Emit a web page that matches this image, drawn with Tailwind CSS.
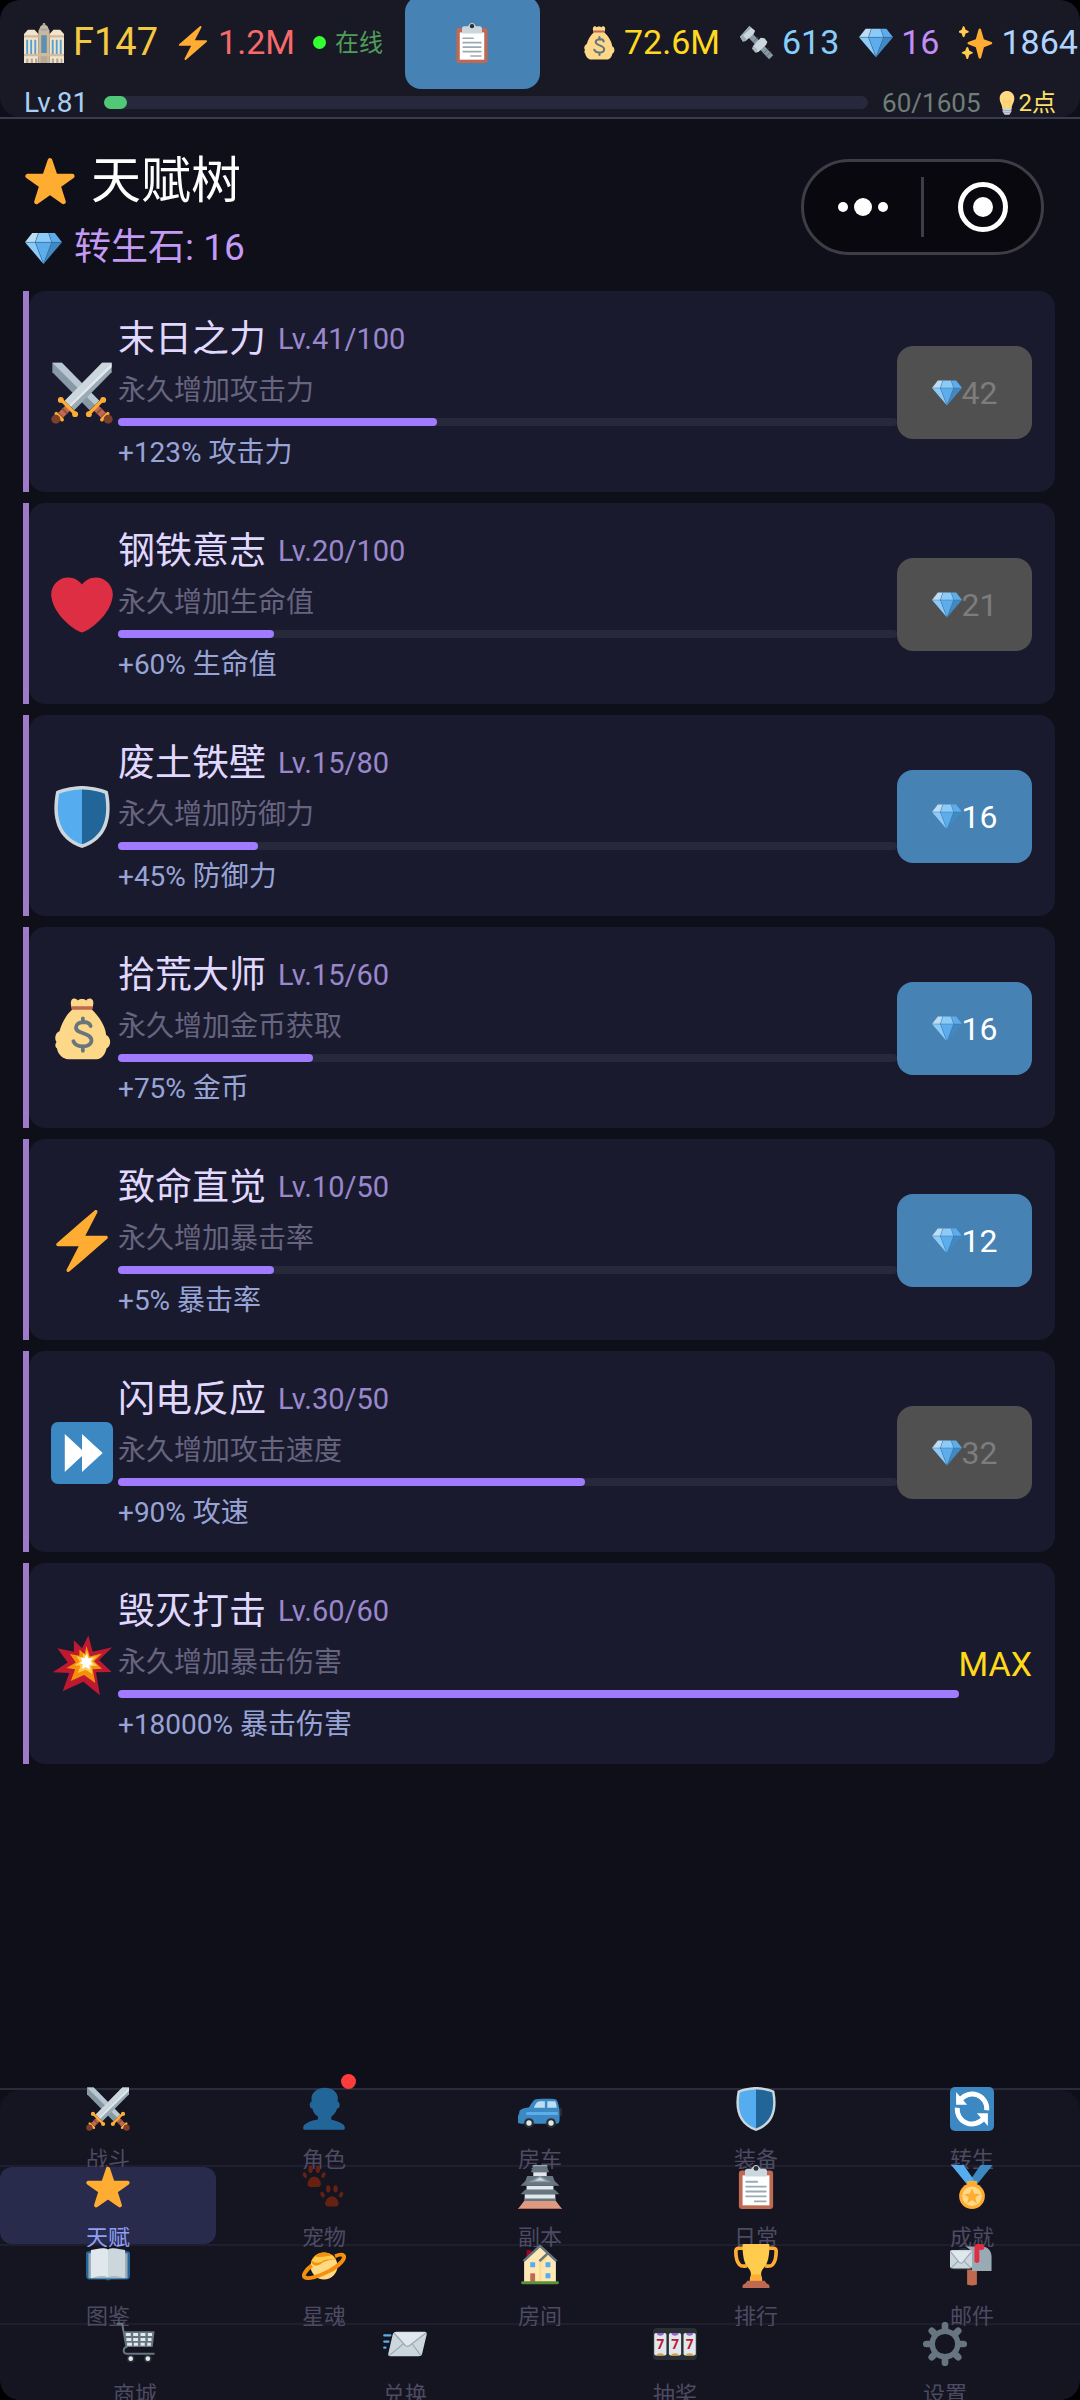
<!DOCTYPE html>
<html lang="zh-CN">
<head>
  <meta charset="UTF-8">
  <meta name="viewport" content="width=device-width, initial-scale=1.0">
  <title>天赋树</title>
  <script src="https://cdn.jsdelivr.net/npm/@tailwindcss/browser@4"></script>
</head>
<body class="bg-black font-[Roboto,'Noto_Sans_CJK_SC',sans-serif] text-white">
  <!-- Icon sprite -->
  <svg class="hidden" aria-hidden="true">
    <symbol id="star" viewBox="0 0 36 36"><path fill="#ffac33" stroke="#ffac33" stroke-width="3.4" stroke-linejoin="round" d="M18 3.2l3.7 11.1 12.3.2-9.900 7 3.600 11.500L18 26.200 8.300 33l3.600-11.500-9.900-7 12.300-.2z"/></symbol>
    <symbol id="gem" viewBox="0 0 36 36"><path fill="#bdddf4" d="M13 3H7l-7 9h10z"/><path fill="#5dadec" d="M36 12l-7-9h-6l3 9z"/><path fill="#4289c1" d="M26 12h10L18 33z"/><path fill="#8ccaf7" d="M10 12H0l18 21zm3-9l-3 9h16l-3-9z"/><path fill="#5dadec" d="M18 33l-8-21h16z"/><path fill="none" stroke="#2f6d9f" stroke-width=".5" d="M0 12h36M13 3l-3 9 8 21 8-21-3-9"/></symbol>
    <symbol id="bolt" viewBox="0 0 36 36"><path fill="#ffac33" d="M32.938 15.651C32.792 15.26 32.418 15 32 15H19.925L26.89 1.458c.219-.426.106-.947-.271-1.243C26.437.071 26.218 0 26 0c-.233 0-.466.082-.653.243L18 6.588 3.347 19.243c-.316.273-.43.714-.284 1.105S3.582 21 4 21h12.075L9.11 34.542c-.219.426-.106.947.271 1.243.182.144.401.215.619.215.233 0 .466-.082.653-.243L18 29.412l14.653-12.655c.317-.273.43-.714.285-1.106z"/></symbol>
    <symbol id="heart" viewBox="0 0 36 36"><path fill="#dd2e44" d="M35.885 11.833c0-5.45-4.418-9.868-9.867-9.868-3.308 0-6.227 1.633-8.018 4.129-1.791-2.496-4.71-4.129-8.017-4.129-5.45 0-9.868 4.417-9.868 9.868 0 .772.098 1.52.266 2.241C1.751 22.587 11.216 31.568 18 34.034c6.783-2.466 16.249-11.447 17.617-19.959.17-.721.268-1.469.268-2.242z"/></symbol>
    <symbol id="shield" viewBox="0 0 36 36"><path fill="#ccd6dd" d="M33 3c-7-3-15-3-15-3S10 0 3 3C0 18 3 31 18 36c15-5 18-18 15-33z"/><path fill="#55acee" d="M18 33.884C6.412 29.729 1.961 19.831 4.76 4.444 11.063 2.029 18 2 18 2z"/><path fill="#226699" d="M31.24 4.444C24.937 2.029 18 2 18 2v31.884c11.588-4.155 16.039-14.053 13.24-29.44z"/></symbol>
    <symbol id="swords" viewBox="0 0 36 36">
      <path fill="#8899a6" d="M.8.5h5.500L28 22.500 22.500 28 .8 6z"/><path fill="#b8c7d1" d="M.8.5h5.500L28 22.500l-2.500 2.500z"/>
      <path stroke="#bf6952" stroke-width="4" d="M26 26.500l6 6"/><path stroke="#8a4b38" stroke-width="1" d="M26.500 30l3-3M29 32.500l3-3"/>
      <path stroke="#ffac33" stroke-width="2" stroke-linecap="round" d="M22 30l8-8M29.500 33.500l3.500-3.500"/><circle cx="22" cy="30.300" r="1.700" fill="#ffac33"/><circle cx="30.300" cy="22" r="1.700" fill="#ffac33"/><circle cx="33.200" cy="33.200" r="2.600" fill="#7c3f2b"/>
      <path fill="#99aab5" d="M35.200.5h-5.500L8 22.500l5.500 5.500L35.200 6z"/><path fill="#ccd6dd" d="M35.200.5h-5.500L8 22.500l2.500 2.500z"/><path fill="#e1e8ed" d="M35.200.5L10.500 25l1 1L35.200 3z"/>
      <path stroke="#bf6952" stroke-width="4" d="M10 26.500l-6 6"/><path stroke="#8a4b38" stroke-width="1" d="M9.500 30l-3-3M7 32.500l-3-3"/>
      <path stroke="#ffac33" stroke-width="2" stroke-linecap="round" d="M14 30l-8-8M6.500 33.500L3 30"/><circle cx="14" cy="30.300" r="1.700" fill="#ffac33"/><circle cx="5.700" cy="22" r="1.700" fill="#ffac33"/><circle cx="2.800" cy="33.200" r="2.600" fill="#7c3f2b"/>
    </symbol>
    <symbol id="bag" viewBox="0 0 36 36"><path fill="#fdd888" d="M12.500 6.500C11 4 11.300 1 12.800.5c1.200-.5 2.400.3 2.700 1 .6-1.300 4.400-1.300 5 0 .4-.8 1.700-1.500 2.800-1C25 1.200 25 4 23.500 6.500c4 3.500 8.500 10.500 8.500 15 1.800.8 2.700 3 2.200 5-.3 1.400-1.200 2.400-2 2.800-.5 3-2.700 6.200-5.700 6.200H10c-3 0-6-2.700-6.500-6.200C2 28 2.500 26.500 3.200 25.500c-1.500-2-.6-5.500 1.700-6.200C6.500 14 9 9.500 12.500 6.500z"/><path fill="#bf6952" d="M12.500 4.800h11c1 0 1 2 0 2h-11c-1 0-1-2 0-2z"/><path fill="none" stroke="#67757f" stroke-width="2.200" stroke-linecap="round" d="M18.500 11.800v2.400M18.500 28v2.700M23 16.300c-1-3.500-8.300-3-8.500.8C14.400 21 23.500 20 23.500 24.600c-.2 4.600-9 4.600-10.500.5"/></symbol>
    <symbol id="ff" viewBox="0 0 36 36"><rect width="36" height="36" rx="4" fill="#3b88c3"/><path fill="#fff" d="M30 18L18 7v9.300L8 7v22l10-9.300V29z"/></symbol>
    <symbol id="boom" viewBox="0 0 36 36"><path fill="#be1931" d="M21.700.8l2.500 9.500 11.400-2.600-7.700 7.400 7.300 6.900-9.100.2 2.300 13.400-9.600-7.900-12 5.600 3.800-10.700-9.600-.4 8.700-5.600-6-8.300 9.600 2V3.700L18 8.300z"/><path fill="#f4900c" d="M20.600 7l2 6 7-1.700-4.600 4.500 4.600 4.400-5.400.2 1.500 8-6.500-4.600-7.700 3.500 2.500-6.800-5-.8 5.400-3.200-3.400-4.900 5.500 1V9l3 2.700z"/><path fill="#ffcc4d" d="M20.800 9.500l1.300 4.300 4.500-1-2.700 3 3 2.700-3.600.2.800 4.600-4-2.600-4.500 2 1.400-4.200-3.400-.4 3.200-2-2-3.200 3.700.7.200-2.600 1.700 1.700z"/><path fill="#fff" d="M20.800 11.500l.9 2.700 2.700-.3-1.500 1.900 1.600 1.900-2.200.3.200 2.700-2.200-1.500-2.300 1 .5-2.600-2-.6 1.700-1.200-.9-2 2.100.3z"/></symbol>
    <symbol id="clip" viewBox="0 0 36 36"><rect x="4" y="4.500" width="28" height="31.500" rx="2.500" fill="#bf6952"/><path fill="#fff" d="M7 8.500h22v24.500H7z"/><path fill="#ccd6dd" d="M11 3h3c1 0 1.500-3 4-3s3 3 4 3h3c1.300 0 2 1 2 2v4.500H9V5c0-1 .7-2 2-2z"/><circle cx="18" cy="2.800" r="2" fill="#292f33"/><path fill="none" stroke="#99aab5" stroke-width="1.500" stroke-linecap="round" d="M10 13.700h9M10 17.700h16M10 21.700h16M10 25.700h16M17 29.700h9"/></symbol>
    <symbol id="towers" viewBox="0 0 36 36"><path fill="#ccb99b" d="M13 36V7l2-4 3-2.500L21 3l2 4v29z"/><path fill="#5c8fb0" d="M15.500 11h5v16h-5z"/><path fill="#99aab5" d="M15 5h6v2h-6zM17 0h2v3h-2z"/><path fill="#f2e3cb" d="M0 36V10l3.500-4h6L13 10v26zM23 36V10l3.500-4h6l3.500 4v26z"/><path fill="#d4b99a" d="M0 11h13v2H0zM23 11h13v2H23zM0 28h36v2H0z"/><path fill="#55a0d0" d="M2 15h1.700v13H2zM5.600 15h1.700v13H5.600zM9.300 15H11v13H9.300zM25 15h1.700v13H25zM28.600 15h1.700v13h-1.700zM32.200 15h1.700v13h-1.700z"/><path fill="#b8aa96" d="M2 32h2v4H2zM6 32h2v4H6zM10 32h2v4h-2zM15 30h6v6h-6zM25 32h2v4h-2zM29 32h2v4h-2zM33 32h1.500v4H33z"/></symbol>
    <symbol id="nutbolt" viewBox="0 0 36 36"><path stroke="#8899a6" stroke-width="6" d="M10 9l23 24"/><path stroke="#5f6d78" stroke-width="1" d="M14 17l5-5M17 20l5-5M25 29l5-5M28 32l5-5"/><path fill="#ccd6dd" d="M10 0l6 5-1.500 3.500L6 16l-3 .5L0 11.500z"/><path fill="#99aab5" d="M0 11.500L3 10l4 4-1 2-3 .5zM10 0l2 2-9 8-3 1.500z"/><path fill="#ccd6dd" d="M22 12.500l4 .5 3 4-1.500 3-8 7.500-3 .5-3.500-4 1-3z"/><path fill="#aab8c2" d="M13 24l1-3 4.500 4-1 3h-1z"/></symbol>
    <symbol id="sparkles" viewBox="0 0 36 36"><path fill="#ffac33" d="M34.300 16.900l-8-3-3-10.300c-.4-1.200-2.200-1.200-2.600 0L17.800 13.900l-8 3c-1.100.5-1.100 2 0 2.500l8 3 3 11.200c.4 1.200 2.200 1.200 2.600 0l3-11.200 8-3c1.100-.5 1.100-2 0-2.500z"/><path fill="#ffcc4d" d="M14 27.500l-3-1.200-1.300-3.500c-.3-.8-1.500-.8-1.800 0l-1.300 3.500-3 1.200c-.8.4-.8 1.400 0 1.700l3 1.200 1.300 3.900c.3.800 1.500.8 1.800 0l1.300-3.900 3-1.200c.8-.3.800-1.300 0-1.700zM9.800 5.200L7 4 5.700.7C5.400 0 4.300 0 4 .7L2.800 4 0 5.200c-.7.4-.7 1.300 0 1.600L2.800 8 4 11.500c.3.700 1.400.7 1.700 0L7 8l2.800-1.200c.7-.3.700-1.200 0-1.600z"/></symbol>
    <symbol id="bulb" viewBox="0 0 36 36"><path fill="#ffd983" d="M29 11c0 7-4 9-4 16H11c0-7-4-9-4-16C7 4 12.500 0 18 0s11 4 11 11z"/><path fill="none" stroke="#ffcc4d" stroke-width="1.500" d="M15 27l-2-13 5 3 5-3-2 13"/><path fill="#ccd6dd" d="M11.500 26h13v5l-3 4.500h-7l-3-4.500z"/><path stroke="#99aab5" stroke-width="1.500" d="M11.500 29.500h13M12.500 32.500h11"/></symbol>
    <symbol id="person" viewBox="0 0 36 36"><path fill="#226699" d="M24 26.799v-2.566c2-1.348 4.080-3.779 4.703-6.896.186.103.206.17.413.17.991 0 1.709-1.287 1.709-2.873 0-1.562-.823-2.827-1.794-2.865.187-.674.293-1.577.293-2.735C29.324 5.168 26 .527 18.541.527c-6.629 0-10.777 4.641-10.777 8.507 0 1.123.069 2.043.188 2.755-.911.137-1.629 1.352-1.629 2.845 0 1.587.804 2.873 1.796 2.873.206 0 .025-.067.209-.17C8.952 20.453 11 22.885 13 24.232v2.414c-5 .645-12 3.437-12 6.230v1.061C1 35 2.076 35 3.137 35h29.725C33.924 35 35 35 35 33.938v-1.061c0-2.615-6-5.225-11-6.078z"/></symbol>
    <symbol id="car" viewBox="0 0 36 36"><path fill="#292f33" d="M33 17h2c1 0 1 1 1 2v3c0 1.500-1 2-2 2h-1z"/><path fill="#3b88c3" d="M0 29v-5c0-1 1-2 1-3 0-3 3-3.500 8-4.500 2-3 3.500-5.500 5-6.200 2-.8 14-.8 16.500-.3 2.500.5 3.500 8 3.500 12v5c0 2-1 3-2 3H5c-2 0-5 0-5-1z"/><path fill="#bbddf5" d="M13 17c1-3 2.500-5 4-5.200 1-.2 4-.2 5-.2V17zM24 11.600h6c1 0 1.500 3 1.700 5.400H24z"/><path fill="#5dadec" d="M8 20.500h24.500v2.500H8c-2 0-2-2.500 0-2.500z"/><circle cx="9" cy="29.500" r="4" fill="#292f33"/><circle cx="27" cy="29.500" r="4" fill="#292f33"/><circle cx="9" cy="29.500" r="2.200" fill="#e1e8ed"/><circle cx="27" cy="29.500" r="2.200" fill="#e1e8ed"/></symbol>
    <symbol id="cycle" viewBox="0 0 36 36"><rect width="36" height="36" rx="4" fill="#3b88c3"/><g fill="none" stroke="#fff" stroke-width="4"><path d="M30 19A12 12 0 0 0 8.500 10.500"/><path d="M6 17a12 12 0 0 0 21.500 8.500"/></g><path fill="#fff" d="M5 4v10.500h9zM31 32V21.500h-9z"/></symbol>
    <symbol id="paws" viewBox="0 0 36 36"><g fill="#662113"><path d="M10 9.500c2.500 0 5.500 3 5.500 6 0 2.500-2 2.500-5.500 2.500s-5.500 0-5.500-2.500c0-3 3-6 5.500-6z"/><ellipse cx="7" cy="3.500" rx="1.800" ry="3"/><ellipse cx="13" cy="3.500" rx="1.800" ry="3"/><ellipse cx="2.300" cy="8.300" rx="1.500" ry="2.400" transform="rotate(-25 2.300 8.300)"/><ellipse cx="17.500" cy="8.300" rx="1.500" ry="2.400" transform="rotate(25 17.500 8.300)"/><path d="M24.500 25.500c2.500 0 5.500 3 5.500 6 0 2.500-2 2.500-5.500 2.500S19 34 19 31.500c0-3 3-6 5.500-6z"/><ellipse cx="21.500" cy="19.500" rx="1.800" ry="3"/><ellipse cx="27.500" cy="19.500" rx="1.800" ry="3"/><ellipse cx="16.800" cy="24.300" rx="1.500" ry="2.400" transform="rotate(-25 16.800 24.300)"/><ellipse cx="32" cy="24.300" rx="1.500" ry="2.400" transform="rotate(25 32 24.300)"/></g></symbol>
    <symbol id="castle" viewBox="0 0 36 36"><path fill="#99aab5" d="M12 0h12v2H12z"/><path fill="#66757f" d="M12.500 1h11l2 5h-15z"/><path fill="#e1e8ed" d="M12.500 6h11v4h-11zM7 17h22v4H7zM5.500 24h25v4h-25z"/><path fill="#66757f" d="M7.500 9h21l1.500 4 4 4H2l4-4z"/><path fill="#ccd6dd" stroke="#8899a6" stroke-width="1.300" d="M11 13.500l7-4 7 4z"/><path fill="#66757f" d="M6 20h24l4 4H2zM5 27.500h26v2H5z"/><path fill="#dd9a80" d="M5 29.500h26l5 6.500H0z"/><path stroke="#bf6952" d="M0 35.700h36"/></symbol>
    <symbol id="medal" viewBox="0 0 36 36"><path fill="#55acee" d="M1 0h10l9 13-6 3z"/><path fill="#3b88c3" d="M35 0H25l-9 13 6 3z"/><path fill="#55acee" d="M1 0h10l9 13-4 2z"/><path fill="#ffac33" d="M14 13h8v4h-8z"/><circle cx="18" cy="25.500" r="10.500" fill="#ffac33"/><circle cx="18" cy="25.500" r="8" fill="#ffd983"/><path fill="#ffac33" d="M18 19l1.700 4.600 4.900.2-3.900 3 1.400 4.700-4.100-2.800-4.100 2.800 1.400-4.700-3.900-3 4.900-.2z"/></symbol>
    <symbol id="book" viewBox="0 0 36 36"><path fill="#226699" d="M2 6h32c1.500 0 2 1 2 2v18c0 2-1 3-3 3H20c0 1-4 1-4 0H3c-2 0-3-1-3-3V8c0-1 .5-2 2-2z"/><path fill="#99aab5" d="M2 7.500h32V28H2z"/><path fill="#e1e8ed" d="M4 5c5-.8 10-2.500 14-.5v23c-4-2-9-.5-14 .5z"/><path fill="#ccd6dd" d="M32 5c-5-.8-10-2.500-14-.5v23c4-2 9-.5 14 .5z"/><path fill="#aab8c2" d="M5 28c5-2 10-2.500 13-.5 3-2 8-1.500 13 .5z"/></symbol>
    <symbol id="planet" viewBox="0 0 36 36"><circle cx="18" cy="18" r="11" fill="#ffd983"/><path fill="#f4900c" d="M7.500 15C8.500 10 13 7 18 7c5 0 8 2.500 10 5.500-6 .5-10 1.500-13 4-3 2-6 1.500-7.500-1.500z"/><path fill="#ffcc4d" d="M11 10c5 2 11-1 14-.5l2 3c-5 0-8 0-11 2-3 1.500-6 1-8-1z"/><path fill="none" stroke="#f4900c" stroke-width="3.200" d="M8 17.500c-5 4-7.500 8-6 9.500 2.500 2.300 12-.5 20.500-5S36 11.500 34 9.500c-1-1-4-.7-7 .5"/></symbol>
    <symbol id="house" viewBox="0 0 36 36"><path fill="#a0041e" d="M7 5h4v8H7z"/><path fill="#ffe8b6" d="M5 14L18 2l13 12v18H5z"/><path fill="#ffd983" d="M17.500 14l6-6 .5 3-5 5v16h-1.500z"/><path fill="none" stroke="#66757f" stroke-width="2" d="M4.500 14L18 1.500 31.500 14M17.500 14L25 7"/><path fill="#55acee" d="M10 15h4v4h-4zM22.500 15h4v4h-4zM22.500 24h4v4h-4z"/><path fill="#bf6952" d="M10 24h4v7h-4z"/><rect x="2.500" y="30.500" width="31" height="2.500" rx="1.200" fill="#5c913b"/></symbol>
    <symbol id="trophy" viewBox="0 0 36 36"><path fill="none" stroke="#ffac33" stroke-width="3" d="M9 3.500H4c-1.500 0-2.500.5-2.500 2.500 0 4 1 9 3 11 1.500 1.500 4 1.200 6 1M27 3.500h5c1.500 0 2.500.5 2.500 2.500 0 4-1 9-3 11-1.500 1.500-4 1.200-6 1"/><path fill="#ffcc4d" d="M8 0h20c.5 0 1 .5 1 1 0 8-1 15-5 19-2.500 2.500-2 6-1 8v3H13v-3c1-2 1.500-5.500-1-8C8 16 7 9 7 1c0-.5.500-1 1-1z"/><path fill="#ffac33" d="M14 25h8l1 5H13z"/><path fill="#bf6952" d="M11 30h14l2 2.500c1 0 2 1 2 2V36H7v-1.500c0-1 1-2 2-2z"/></symbol>
    <symbol id="mailbox" viewBox="0 0 36 36"><path fill="#c1694f" d="M14 20h8v13c0 1.200-8 1.200-8 0z"/><path fill="#292f33" d="M5 7c3-5 9-5 13 0v14H3z"/><path fill="#99aab5" d="M12 2h14c5 0 8 4 8 8v12H18V11c0-5-2-8-6-9z"/><rect y="5" width="18" height="15" rx="1.500" fill="#ccd6dd"/><path fill="#e1e8ed" d="M0 6l7.500 9c1 1 2 1 3 0L18 6z"/><path fill="none" stroke="#99aab5" stroke-width="1" d="M.5 6.500l7 8.500c1 1 2 1 3 0l7-8.500M1 19.500L6.500 14M17 19.500L11.500 14"/><path fill="#dd2e44" d="M20 2c0-1.200 1-2 2-2h4c3 0 3 5 0 5h-2v9c0 2-4 2-4 0z"/></symbol>
    <symbol id="cart" viewBox="0 0 36 36"><path fill="#66757f" d="M9 7.500h25l-1.500 13H11z"/><path fill="none" stroke="#66757f" stroke-width="1.600" d="M3 1.500h4.500L11 20.500c-3 .5-3 5 0 5.500h23"/><path fill="#e1e8ed" d="M10.500 9h4v2.500h-4zM16.500 9h4v2.500h-4zM22.500 9h4v2.500h-4zM28.500 9h3.500v2.500h-3.500zM11 13h4v2.500h-4zM16.500 13h4v2.500h-4zM22.500 13h4v2.500h-4zM28.500 13h3v2.500h-3zM11.500 17h4v2.500h-4zM17 17h3.500v2.500H17zM22.500 17H26v2.500h-3.500zM28 17h3v2.500h-3z"/><circle cx="14.500" cy="30" r="3.200" fill="#292f33"/><circle cx="28.500" cy="30" r="3.200" fill="#292f33"/><circle cx="14.500" cy="30" r="1.900" fill="#e1e8ed"/><circle cx="28.500" cy="30" r="1.900" fill="#e1e8ed"/></symbol>
    <symbol id="mail" viewBox="0 0 36 36"><path stroke="#5dadec" stroke-width="1.800" stroke-linecap="round" d="M1 11h5M1 16h3.500M1 21h1"/><path fill="#ccd6dd" d="M11 8h23c1.500 0 2 1 1.700 2.500L32 26c-.4 1.500-1.500 2-3 2H6c-1.500 0-2-1-1.600-2.500L8 10c.5-1.300 1.500-2 3-2z"/><path fill="#e1e8ed" d="M9 8.500h26L22 19c-1.500 1.200-3 1.200-4 0z"/><path fill="none" stroke="#99aab5" stroke-width="1" d="M9 9l9 10c1 1.200 2.500 1.200 4 0l13-10M5 27.500L16.500 18M31 27.500L24 18"/></symbol>
    <symbol id="slots" viewBox="0 0 36 36"><rect y="5" width="36" height="26" rx="3" fill="#292f33"/><g fill="#e1e8ed"><rect x="1" y="9" width="10" height="18.500" rx="1.500"/><rect x="13" y="9" width="10" height="18.500" rx="1.500"/><rect x="25" y="9" width="10" height="18.500" rx="1.500"/></g><path fill="#9266cc" d="M3 9h6c0 3-6 3-6 0zM15 9h6c0 3-6 3-6 0zM27 9h6c0 3-6 3-6 0z"/><path fill="#e0a040" d="M3 27.500h6c0-2.500-6-2.500-6 0zM15 27.500h6c0-2.500-6-2.500-6 0zM27 27.500h6c0-2.500-6-2.500-6 0z"/><g fill="#be1931" font-family="Open Sans, sans-serif" font-size="11" font-weight="700" text-anchor="middle"><text x="6" y="22">7</text><text x="18" y="22">7</text><text x="30" y="22">7</text></g></symbol>
    <symbol id="gear" viewBox="0 0 36 36"><circle cx="18" cy="18" r="10.500" fill="none" stroke="#66757f" stroke-width="4.500"/><path stroke="#66757f" stroke-width="5.500" stroke-linecap="round" d="M18 2.700v2.500M18 30.800v2.500M2.700 18h2.500M30.800 18h2.500M7.200 7.200L9 9M27 27l1.800 1.800M28.800 7.200L27 9M7.200 28.800L9 27"/></symbol>
  </svg>

  <div class="relative flex min-h-screen flex-col overflow-hidden rounded-[20px] bg-[#0e0f18]">
    <header class="border-b-2 border-[#3a3a50]">
      <div class="overflow-hidden rounded-[20px] bg-[#191926]">
        <div class="flex h-[85px] items-center pl-6 text-[34px] whitespace-nowrap">
          <div class="flex items-center gap-[18px]">
            <span class="flex items-center gap-[9px] text-[38px] text-[#f5c842]"><svg class="size-10" aria-hidden="true"><use href="#towers"/></svg>F147</span>
            <span class="flex items-center gap-2 text-[#f66a6a]"><svg class="size-[34px]" aria-hidden="true"><use href="#bolt"/></svg>1.2M</span>
            <span class="flex items-center gap-[9px] text-2xl text-[#4f9d58]"><i class="size-[13px] rounded-full bg-[#33ff33]"></i>在线</span>
          </div>
          <button type="button" aria-label="任务" class="ml-[22px] flex h-[93px] w-[135px] shrink-0 items-center justify-center rounded-2xl bg-[#4682b4]"><svg class="size-10"><use href="#clip"/></svg></button>
          <div class="ml-[42px] flex items-center gap-5">
            <span class="flex items-center gap-2 text-[#ffd820]"><svg class="size-[34px]" aria-hidden="true"><use href="#bag"/></svg>72.6M</span>
            <span class="flex items-center gap-2 text-[#87cefa]"><svg class="size-[34px]" aria-hidden="true"><use href="#nutbolt"/></svg>613</span>
            <span class="flex items-center gap-2 text-[#c38cf5]"><svg class="size-[34px]" aria-hidden="true"><use href="#gem"/></svg>16</span>
            <span class="flex items-center gap-2 text-[#b0d4ff]"><svg class="size-[34px]" aria-hidden="true"><use href="#sparkles"/></svg>1864</span>
          </div>
        </div>
        <div class="flex h-8 items-center px-6 pt-[3px] text-[26px] leading-none whitespace-nowrap">
          <span class="text-[28px] text-[#a8d0f5]">Lv.81</span>
          <div class="mr-[14px] ml-4 h-[13px] flex-1 rounded-full bg-[#28283c]"><div class="h-full rounded-full bg-[#50c878]" style="width:3%"></div></div>
          <span class="text-[#6f7f78]">60/1605</span>
          <span class="ml-[14px] flex items-center text-2xl leading-none text-[#ffe066]"><svg class="size-6" aria-hidden="true"><use href="#bulb"/></svg>2点</span>
        </div>
      </div>
    </header>

    <!-- Mini-program capsule floats over the page -->
    <div class="absolute top-[159px] right-9 flex h-24 w-[243px] items-center rounded-full border-3 border-[#3e3d46] bg-[#08080e]">
      <button type="button" aria-label="更多" class="flex h-full flex-1 items-center justify-center gap-[6px]"><i class="size-[10px] rounded-full bg-white"></i><i class="size-[18px] rounded-full bg-white"></i><i class="size-[10px] rounded-full bg-white"></i></button>
      <i class="h-[60px] w-[3px] bg-[#3e3d46]"></i>
      <button type="button" aria-label="关闭" class="flex h-full flex-1 items-center justify-center"><i class="flex size-[50px] items-center justify-center rounded-full border-5 border-white"><i class="size-5 rounded-full bg-white"></i></i></button>
    </div>

    <main class="flex-1 pt-8 pr-[25px] pl-[23px]">
      <h1 class="flex h-[60px] items-center gap-4 pl-[2px] text-[50px]"><svg class="size-[50px]" aria-hidden="true"><use href="#star"/></svg>天赋树</h1>
      <p class="mt-3 flex h-[50px] items-center gap-3 pl-[2px] text-[37px] text-[#c49af5]"><svg class="size-[37px]" aria-hidden="true"><use href="#gem"/></svg>转生石: 16</p>

      <ul class="mt-[18px] space-y-[11px]">
        <li class="flex">
          <i class="w-[6px] bg-[#9f7ac8]"></i>
          <div class="flex flex-1 items-center rounded-2xl bg-[#1a1a2e] pt-[23px] pr-[23px] pb-[21px] pl-[22px]">
            <svg class="size-[62px] shrink-0" aria-hidden="true"><use href="#swords"/></svg>
            <div class="ml-[5px] flex-1">
              <h2 class="flex h-[52px] items-center gap-3 text-[37px] text-[#e0d8ff]">末日之力<span class="text-[29px] text-[#9a88cc]">Lv.41/100</span></h2>
              <p class="mt-[7px] text-[28px] leading-9 text-[#66647f]">永久增加攻击力</p>
              <div class="mt-[9px] h-2 rounded-full bg-[#28283b]"><div class="h-full rounded-full bg-[#a07aff]" style="width:41%"></div></div>
              <p class="mt-[9px] text-[28px] leading-9 text-[#98a4d6]">+123% 攻击力</p>
            </div>
            <button type="button" disabled class="flex h-[93px] w-[135px] items-center justify-center rounded-2xl bg-[#505050] text-[32px] text-[#7d7d7d]"><svg class="size-[30px]" aria-hidden="true"><use href="#gem"/></svg>42</button>
          </div>
        </li>
        <li class="flex">
          <i class="w-[6px] bg-[#9f7ac8]"></i>
          <div class="flex flex-1 items-center rounded-2xl bg-[#1a1a2e] pt-[23px] pr-[23px] pb-[21px] pl-[22px]">
            <svg class="size-[62px] shrink-0" aria-hidden="true"><use href="#heart"/></svg>
            <div class="ml-[5px] flex-1">
              <h2 class="flex h-[52px] items-center gap-3 text-[37px] text-[#e0d8ff]">钢铁意志<span class="text-[29px] text-[#9a88cc]">Lv.20/100</span></h2>
              <p class="mt-[7px] text-[28px] leading-9 text-[#66647f]">永久增加生命值</p>
              <div class="mt-[9px] h-2 rounded-full bg-[#28283b]"><div class="h-full rounded-full bg-[#a07aff]" style="width:20%"></div></div>
              <p class="mt-[9px] text-[28px] leading-9 text-[#98a4d6]">+60% 生命值</p>
            </div>
            <button type="button" disabled class="flex h-[93px] w-[135px] items-center justify-center rounded-2xl bg-[#505050] text-[32px] text-[#7d7d7d]"><svg class="size-[30px]" aria-hidden="true"><use href="#gem"/></svg>21</button>
          </div>
        </li>
        <li class="flex">
          <i class="w-[6px] bg-[#9f7ac8]"></i>
          <div class="flex flex-1 items-center rounded-2xl bg-[#1a1a2e] pt-[23px] pr-[23px] pb-[21px] pl-[22px]">
            <svg class="size-[62px] shrink-0" aria-hidden="true"><use href="#shield"/></svg>
            <div class="ml-[5px] flex-1">
              <h2 class="flex h-[52px] items-center gap-3 text-[37px] text-[#e0d8ff]">废土铁壁<span class="text-[29px] text-[#9a88cc]">Lv.15/80</span></h2>
              <p class="mt-[7px] text-[28px] leading-9 text-[#66647f]">永久增加防御力</p>
              <div class="mt-[9px] h-2 rounded-full bg-[#28283b]"><div class="h-full rounded-full bg-[#a07aff]" style="width:18%"></div></div>
              <p class="mt-[9px] text-[28px] leading-9 text-[#98a4d6]">+45% 防御力</p>
            </div>
            <button type="button" class="flex h-[93px] w-[135px] items-center justify-center rounded-2xl bg-[#4682b4] text-[32px] text-white"><svg class="size-[30px]" aria-hidden="true"><use href="#gem"/></svg>16</button>
          </div>
        </li>
        <li class="flex">
          <i class="w-[6px] bg-[#9f7ac8]"></i>
          <div class="flex flex-1 items-center rounded-2xl bg-[#1a1a2e] pt-[23px] pr-[23px] pb-[21px] pl-[22px]">
            <svg class="size-[62px] shrink-0" aria-hidden="true"><use href="#bag"/></svg>
            <div class="ml-[5px] flex-1">
              <h2 class="flex h-[52px] items-center gap-3 text-[37px] text-[#e0d8ff]">拾荒大师<span class="text-[29px] text-[#9a88cc]">Lv.15/60</span></h2>
              <p class="mt-[7px] text-[28px] leading-9 text-[#66647f]">永久增加金币获取</p>
              <div class="mt-[9px] h-2 rounded-full bg-[#28283b]"><div class="h-full rounded-full bg-[#a07aff]" style="width:25%"></div></div>
              <p class="mt-[9px] text-[28px] leading-9 text-[#98a4d6]">+75% 金币</p>
            </div>
            <button type="button" class="flex h-[93px] w-[135px] items-center justify-center rounded-2xl bg-[#4682b4] text-[32px] text-white"><svg class="size-[30px]" aria-hidden="true"><use href="#gem"/></svg>16</button>
          </div>
        </li>
        <li class="flex">
          <i class="w-[6px] bg-[#9f7ac8]"></i>
          <div class="flex flex-1 items-center rounded-2xl bg-[#1a1a2e] pt-[23px] pr-[23px] pb-[21px] pl-[22px]">
            <svg class="size-[62px] shrink-0" aria-hidden="true"><use href="#bolt"/></svg>
            <div class="ml-[5px] flex-1">
              <h2 class="flex h-[52px] items-center gap-3 text-[37px] text-[#e0d8ff]">致命直觉<span class="text-[29px] text-[#9a88cc]">Lv.10/50</span></h2>
              <p class="mt-[7px] text-[28px] leading-9 text-[#66647f]">永久增加暴击率</p>
              <div class="mt-[9px] h-2 rounded-full bg-[#28283b]"><div class="h-full rounded-full bg-[#a07aff]" style="width:20%"></div></div>
              <p class="mt-[9px] text-[28px] leading-9 text-[#98a4d6]">+5% 暴击率</p>
            </div>
            <button type="button" class="flex h-[93px] w-[135px] items-center justify-center rounded-2xl bg-[#4682b4] text-[32px] text-white"><svg class="size-[30px]" aria-hidden="true"><use href="#gem"/></svg>12</button>
          </div>
        </li>
        <li class="flex">
          <i class="w-[6px] bg-[#9f7ac8]"></i>
          <div class="flex flex-1 items-center rounded-2xl bg-[#1a1a2e] pt-[23px] pr-[23px] pb-[21px] pl-[22px]">
            <svg class="size-[62px] shrink-0" aria-hidden="true"><use href="#ff"/></svg>
            <div class="ml-[5px] flex-1">
              <h2 class="flex h-[52px] items-center gap-3 text-[37px] text-[#e0d8ff]">闪电反应<span class="text-[29px] text-[#9a88cc]">Lv.30/50</span></h2>
              <p class="mt-[7px] text-[28px] leading-9 text-[#66647f]">永久增加攻击速度</p>
              <div class="mt-[9px] h-2 rounded-full bg-[#28283b]"><div class="h-full rounded-full bg-[#a07aff]" style="width:60%"></div></div>
              <p class="mt-[9px] text-[28px] leading-9 text-[#98a4d6]">+90% 攻速</p>
            </div>
            <button type="button" disabled class="flex h-[93px] w-[135px] items-center justify-center rounded-2xl bg-[#505050] text-[32px] text-[#7d7d7d]"><svg class="size-[30px]" aria-hidden="true"><use href="#gem"/></svg>32</button>
          </div>
        </li>
        <li class="flex">
          <i class="w-[6px] bg-[#9f7ac8]"></i>
          <div class="flex flex-1 items-center rounded-2xl bg-[#1a1a2e] pt-[23px] pr-[23px] pb-[21px] pl-[22px]">
            <svg class="size-[62px] shrink-0" aria-hidden="true"><use href="#boom"/></svg>
            <div class="ml-[5px] flex-1">
              <h2 class="flex h-[52px] items-center gap-3 text-[37px] text-[#e0d8ff]">毁灭打击<span class="text-[29px] text-[#9a88cc]">Lv.60/60</span></h2>
              <p class="mt-[7px] text-[28px] leading-9 text-[#66647f]">永久增加暴击伤害</p>
              <div class="mt-[9px] h-2 rounded-full bg-[#28283b]"><div class="h-full rounded-full bg-[#a07aff]" style="width:100%"></div></div>
              <p class="mt-[9px] text-[28px] leading-9 text-[#98a4d6]">+18000% 暴击伤害</p>
            </div>
            <span class="text-[34px] text-[#ffd91a]">MAX</span>
          </div>
        </li>
      </ul>
    </main>

    <nav class="border-t-2 border-[#2b2b3e] text-[22px] text-[#4c4b62]">
      <div class="rounded-[20px] bg-[#151421]">
        <div class="grid h-[75px] grid-cols-5 grid-rows-1">
          <a href="#" class="flex h-full flex-col items-center justify-center"><svg class="size-11 shrink-0" aria-hidden="true"><use href="#swords"/></svg><span class="mt-4 h-[22px] shrink-0 overflow-hidden leading-[26px]">战斗</span></a>
          <a href="#" class="flex h-full flex-col items-center justify-center"><span class="relative size-11 shrink-0"><svg class="size-11" aria-hidden="true"><use href="#person"/></svg><i class="absolute -top-[13px] -right-[10px] size-[15px] rounded-full bg-[#ff3b3b]"></i></span><span class="mt-4 h-[22px] shrink-0 overflow-hidden leading-[26px]">角色</span></a>
          <a href="#" class="flex h-full flex-col items-center justify-center"><svg class="size-11 shrink-0" aria-hidden="true"><use href="#car"/></svg><span class="mt-4 h-[22px] shrink-0 overflow-hidden leading-[26px]">房车</span></a>
          <a href="#" class="flex h-full flex-col items-center justify-center"><svg class="size-11 shrink-0" aria-hidden="true"><use href="#shield"/></svg><span class="mt-4 h-[22px] shrink-0 overflow-hidden leading-[26px]">装备</span></a>
          <a href="#" class="flex h-full flex-col items-center justify-center"><svg class="size-11 shrink-0" aria-hidden="true"><use href="#cycle"/></svg><span class="mt-4 h-[22px] shrink-0 overflow-hidden leading-[26px]">转生</span></a>
        </div>
        <div class="grid h-[79px] grid-cols-5 grid-rows-1 border-t-2 border-[#1f1e2f]">
          <a href="#" aria-current="page" class="flex h-full flex-col items-center justify-center rounded-xl bg-[#282b4b] text-[#8f9ff5]"><svg class="size-11 shrink-0" aria-hidden="true"><use href="#star"/></svg><span class="mt-4 h-[22px] shrink-0 overflow-hidden leading-[26px]">天赋</span></a>
          <a href="#" class="flex h-full flex-col items-center justify-center"><svg class="size-11 shrink-0" aria-hidden="true"><use href="#paws"/></svg><span class="mt-4 h-[22px] shrink-0 overflow-hidden leading-[26px]">宠物</span></a>
          <a href="#" class="flex h-full flex-col items-center justify-center"><svg class="size-11 shrink-0" aria-hidden="true"><use href="#castle"/></svg><span class="mt-4 h-[22px] shrink-0 overflow-hidden leading-[26px]">副本</span></a>
          <a href="#" class="flex h-full flex-col items-center justify-center"><svg class="size-11 shrink-0" aria-hidden="true"><use href="#clip"/></svg><span class="mt-4 h-[22px] shrink-0 overflow-hidden leading-[26px]">日常</span></a>
          <a href="#" class="flex h-full flex-col items-center justify-center"><svg class="size-11 shrink-0" aria-hidden="true"><use href="#medal"/></svg><span class="mt-4 h-[22px] shrink-0 overflow-hidden leading-[26px]">成就</span></a>
        </div>
        <div class="grid h-[79px] grid-cols-5 grid-rows-1 border-t-2 border-[#1f1e2f]">
          <a href="#" class="flex h-full flex-col items-center justify-center"><svg class="size-11 shrink-0" aria-hidden="true"><use href="#book"/></svg><span class="mt-4 h-[22px] shrink-0 overflow-hidden leading-[26px]">图鉴</span></a>
          <a href="#" class="flex h-full flex-col items-center justify-center"><svg class="size-11 shrink-0" aria-hidden="true"><use href="#planet"/></svg><span class="mt-4 h-[22px] shrink-0 overflow-hidden leading-[26px]">星魂</span></a>
          <a href="#" class="flex h-full flex-col items-center justify-center"><svg class="size-11 shrink-0" aria-hidden="true"><use href="#house"/></svg><span class="mt-4 h-[22px] shrink-0 overflow-hidden leading-[26px]">房间</span></a>
          <a href="#" class="flex h-full flex-col items-center justify-center"><svg class="size-11 shrink-0" aria-hidden="true"><use href="#trophy"/></svg><span class="mt-4 h-[22px] shrink-0 overflow-hidden leading-[26px]">排行</span></a>
          <a href="#" class="flex h-full flex-col items-center justify-center"><svg class="size-11 shrink-0" aria-hidden="true"><use href="#mailbox"/></svg><span class="mt-4 h-[22px] shrink-0 overflow-hidden leading-[26px]">邮件</span></a>
        </div>
        <div class="grid h-[77px] grid-cols-4 grid-rows-1 border-t-2 border-[#1f1e2f]">
          <a href="#" class="flex h-full flex-col items-center justify-center"><svg class="size-11 shrink-0" aria-hidden="true"><use href="#cart"/></svg><span class="mt-4 h-[22px] shrink-0 overflow-hidden leading-[26px]">商城</span></a>
          <a href="#" class="flex h-full flex-col items-center justify-center"><svg class="size-11 shrink-0" aria-hidden="true"><use href="#mail"/></svg><span class="mt-4 h-[22px] shrink-0 overflow-hidden leading-[26px]">兑换</span></a>
          <a href="#" class="flex h-full flex-col items-center justify-center"><svg class="size-11 shrink-0" aria-hidden="true"><use href="#slots"/></svg><span class="mt-4 h-[22px] shrink-0 overflow-hidden leading-[26px]">抽奖</span></a>
          <a href="#" class="flex h-full flex-col items-center justify-center"><svg class="size-11 shrink-0" aria-hidden="true"><use href="#gear"/></svg><span class="mt-4 h-[22px] shrink-0 overflow-hidden leading-[26px]">设置</span></a>
        </div>
      </div>
    </nav>
  </div>
</body>
</html>
